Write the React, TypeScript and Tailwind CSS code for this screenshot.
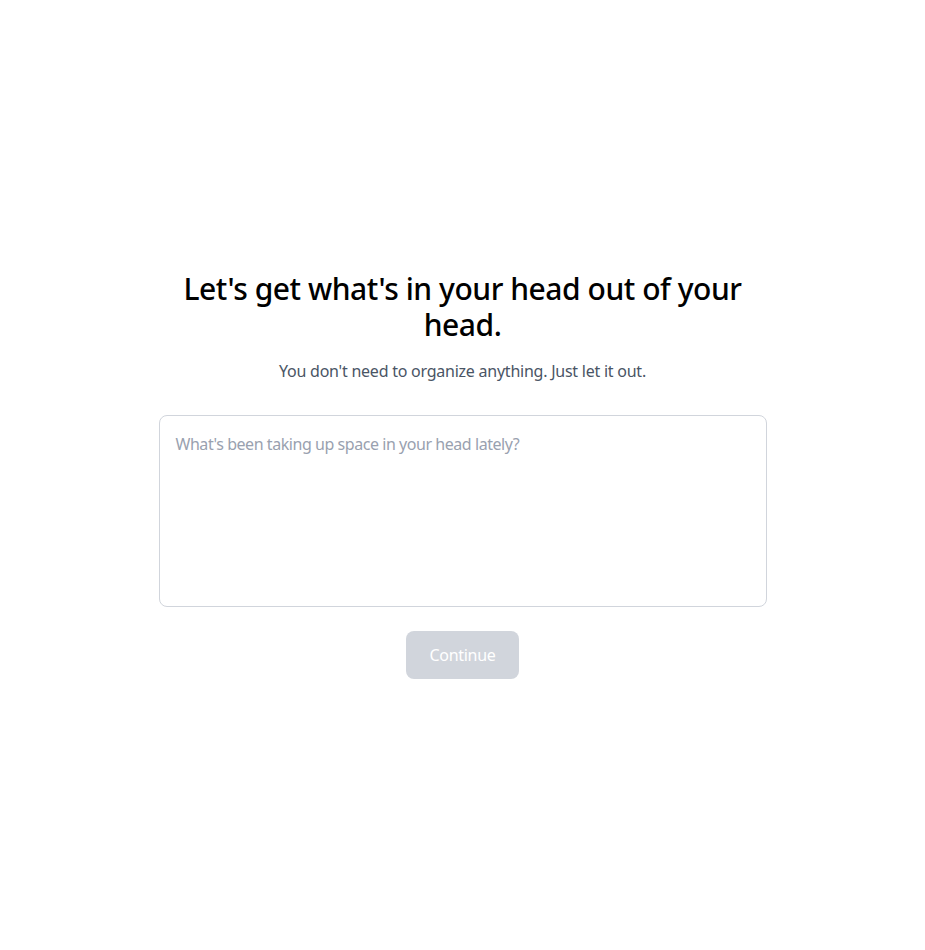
import { useState } from 'react';

export default function App() {
  const [text, setText] = useState('');

  return (
    <div
      className="min-h-screen bg-white flex items-center justify-center px-4"
      style={{ fontFamily: '"Noto Sans", "Open Sans", sans-serif' }}
    >
      <div className="w-full max-w-[608px] flex flex-col items-center">
        {/* Heading */}
        <h1 className="text-3xl font-medium text-black text-center leading-9 tracking-[-0.015em] mb-4">
          Let's get what's in your head out of your head.
        </h1>
        <p className="text-base text-gray-600 text-center tracking-[-0.015em] mb-8">
          You don't need to organize anything. Just let it out.
        </p>

        {/* Brain dump input */}
        <textarea
          value={text}
          onChange={(e) => setText(e.target.value)}
          placeholder="What's been taking up space in your head lately?"
          className="w-full h-[192px] resize-none rounded-lg border border-gray-300 p-4 text-base tracking-[-0.028em] text-gray-900 placeholder:text-gray-400 outline-none focus:border-gray-400"
        />

        <button
          disabled={!text.trim()}
          className="mt-6 rounded-lg bg-gray-300 px-6 py-3 text-base tracking-[-0.02em] text-white disabled:cursor-not-allowed"
        >
          Continue
        </button>
      </div>
    </div>
  );
}
